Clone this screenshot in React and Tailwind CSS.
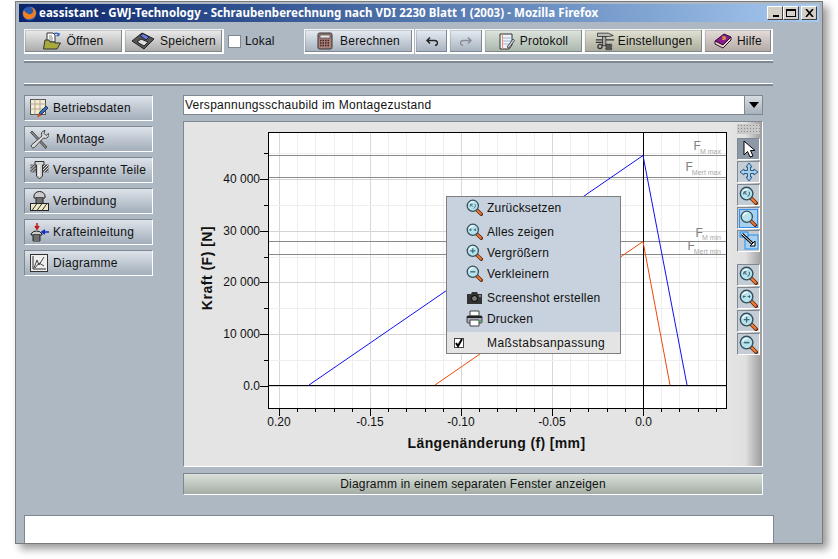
import React from "react";

const F = { fontFamily: '"Liberation Sans", Arial, sans-serif' };

const Mag = ({ v = "", s = 22 }) => (
  <svg width={s} height={s} viewBox="0 0 20 20" className="shrink-0">
    <path d="M12 12 L18 18" stroke="#5a2a10" strokeWidth="4" strokeLinecap="round" />
    <path d="M12.5 12.5 L17.5 17.5" stroke="#f07830" strokeWidth="2.4" strokeLinecap="round" />
    <circle cx="8" cy="8" r="6.6" fill="#b8e2ec" stroke="#34505c" strokeWidth="1.5" />
    <path d="M4 7 A4.4 4.4 0 0 1 9 3.6" stroke="#fff" strokeWidth="1.2" fill="none" />
    {v === "plus" && <path d="M5 8H11M8 5V11" stroke="#3c6a7a" strokeWidth="1.4" />}
    {v === "minus" && <path d="M5 8H11" stroke="#3c6a7a" strokeWidth="1.6" />}
    {v === "all" && <path d="M4 8H7M9 8H12M5 6.5V9.5M11 6.5V9.5" stroke="#3c6a7a" strokeWidth="1.1" />}
    {v === "reset" && <path d="M5 6 L8 9 M5 6V9M5 6H8M10.5 6 A3.4 3.4 0 0 1 9 11" stroke="#3c6a7a" strokeWidth="1.1" fill="none" />}
  </svg>
);

const Folder = () => (
  <svg width="18" height="18" viewBox="0 0 18 18">
    <path d="M4 1H10L12 3V10H4Z" fill="#fff" stroke="#333" />
    <path d="M6 4H9M6 6H10M6 8H10" stroke="#888" />
    <path d="M11 2 A3 3 0 0 1 16 3 M16 3.5L16 1M16 3.5L13.5 3.5" stroke="#3060c0" strokeWidth="1.3" fill="none" />
    <path d="M.5 17 L2 8 H6 L7 10 H12 V11 H17.5 L14 17Z" fill="#a8a83c" stroke="#333" />
  </svg>
);
const Floppy = () => (
  <svg width="24" height="18" viewBox="0 0 24 18">
    <path d="M1 9 L11 1 L23 7 L13 17Z" fill="#555" stroke="#222" />
    <path d="M9 3.5 L12 1.5 L18 5 L15 8Z" fill="#6a78e8" stroke="#222" />
    <path d="M6 10 L10 7 L17 10 L13 14Z" fill="#ddd" stroke="#222" />
  </svg>
);
const Calc = () => (
  <svg width="16" height="18" viewBox="0 0 16 18">
    <rect x="1" y="1" width="14" height="16" rx="1.5" fill="#a88078" stroke="#333" />
    <rect x="3" y="3" width="10" height="3" fill="#e8e8e8" stroke="#333" strokeWidth=".6" />
    <path d="M3 8.5H13M3 11H13M3 13.5H13" stroke="#402020" strokeWidth="1.3" strokeDasharray="1.5 1" />
  </svg>
);
const Undo = ({ c = "#222", flip }) => (
  <svg width="12" height="9" viewBox="0 0 12 9" style={flip ? { transform: "scaleX(-1)" } : undefined}>
    <path d="M4 .5 L1 3.5 L4 6.5 M1.5 3.5 H8 A3 2.5 0 0 1 9 8.5" stroke={c} strokeWidth="1.5" fill="none" />
  </svg>
);
const Note = () => (
  <svg width="16" height="17" viewBox="0 0 16 17">
    <path d="M1 1H13V12L10 16H1Z" fill="#eef2fa" stroke="#333" />
    <path d="M3.5 1V16" stroke="#f09060" />
    <path d="M4 5H12M4 8H12M4 11H11" stroke="#a0b8d8" />
    <path d="M8 14 L14 6 L15.5 7.5 L10 15Z" fill="#ccc" stroke="#333" strokeWidth=".8" />
  </svg>
);
const Tools = () => (
  <svg width="20" height="19" viewBox="0 0 24 22">
    <path d="M3 1 H16 L22 4 L16 5 H3Z" fill="#bbb" stroke="#333" />
    <rect x="9" y="5" width="4" height="11" fill="#aaa" stroke="#333" />
    <path d="M1 9 H9 M13 9 H23 M1 12H9" stroke="#333" strokeWidth="1.5" />
    <rect x="13" y="14" width="7" height="7" fill="#555" stroke="#222" strokeDasharray="1 1" />
    <circle cx="6" cy="17" r="2.5" fill="none" stroke="#333" strokeWidth="1.5" />
  </svg>
);
const Book = () => (
  <svg width="18" height="16" viewBox="0 0 18 16">
    <path d="M1 8 L10 1 L17 4 L9 12Z" fill="#8a1a90" stroke="#301030" />
    <path d="M1 8 L9 12 L17 4 V7 L9 15 L1 11Z" fill="#e8d8c8" stroke="#301030" />
    <path d="M8 4 H11 V6 H9 V7" stroke="#f0d020" strokeWidth="1.2" fill="none" />
  </svg>
);
const Table = () => (
  <svg width="19" height="19" viewBox="0 0 19 19">
    <rect x=".5" y=".5" width="15" height="15" fill="#f4ecd4" stroke="#555" />
    <path d="M.5 5H15.5M.5 10H15.5M5 .5V15.5M10 .5V15.5" stroke="#b0a890" />
    <path d="M8 17 L10 13 L16 7 L18 9 L12 15Z" fill="#3070c0" stroke="#223" strokeWidth=".8" />
    <path d="M7 18.5 L8.5 14.5 L11.5 16.5Z" fill="#e05020" />
  </svg>
);
const Wrench = () => (
  <svg width="19" height="19" viewBox="0 0 19 19">
    <path d="M2 1 L17 17 L15.5 18.5 L.5 2.5Z" fill="#888" stroke="#333" strokeWidth=".8" />
    <path d="M15 .5 A3.6 3.6 0 0 0 12 6 L1.5 15 A2 2 0 0 0 4 17.8 L13.5 8 A3.6 3.6 0 0 0 18.5 3.5 L16 5.5 L14 3.5Z" fill="#dcdcdc" stroke="#333" strokeWidth=".9" />
  </svg>
);
const Hatch = () => (
  <svg width="19" height="19" viewBox="0 0 19 19">
    <rect x=".5" y="3.5" width="5.5" height="8" fill="#555" />
    <rect x="13" y="3.5" width="5.5" height="8" fill="#555" />
    <path d="M.5 6L3 3.5M.5 9L5.5 4M1 11.5L6 6.5M4 11.5L6 9.5M13 6L15.5 3.5M13 9L18 4M13.5 11.5L18.5 6.5M16.5 11.5L18.5 9.5" stroke="#eee" strokeWidth=".9" />
    <path d="M5 .5 H14 V4 H12.5 V15 L9.5 18 L6.5 15 V4 H5Z" fill="#d4d4d4" stroke="#333" />
    <path d="M9 4V15" stroke="#fff" />
  </svg>
);
const Bolt = () => (
  <svg width="19" height="20" viewBox="0 0 19 20">
    <path d="M4 5 A5.5 4.5 0 0 1 15 5 V7 H4Z" fill="#ccc" stroke="#222" />
    <path d="M6 7H13V13H6Z" fill="#bbb" stroke="#222" />
    <path d="M6 9H13M6 11H13" stroke="#222" />
    <rect x=".5" y="12.5" width="18" height="7" fill="#eee8c8" stroke="#222" />
    <path d="M2 19.5 L7 12.5 M7 19.5 L12 12.5 M12 19.5 L17 12.5" stroke="#333" />
  </svg>
);
const BoltForce = () => (
  <svg width="19" height="19" viewBox="0 0 19 19">
    <path d="M1 11 A6 5 0 0 1 12 11 V12H1Z" fill="#ccc" stroke="#222" />
    <path d="M3 12H10V18H3Z" fill="#bbb" stroke="#222" />
    <path d="M3 14H10M3 16H10" stroke="#222" />
    <path d="M7 0V5M5 3L7 6L9 3" stroke="#c02020" strokeWidth="1.6" fill="none" />
    <path d="M19 9H12M15 7L12 9L15 11" stroke="#1030c0" strokeWidth="1.6" fill="none" />
  </svg>
);
const Graph = () => (
  <svg width="18" height="18" viewBox="0 0 18 18">
    <rect x=".5" y=".5" width="17" height="17" fill="#eee" stroke="#333" />
    <path d="M3 2V15H16" stroke="#333" fill="none" />
    <path d="M4 14 L7 6 L9 11 L14 3 M5 14 L9 9 L14 12" stroke="#333" strokeWidth=".9" fill="none" />
  </svg>
);
const Camera = () => (
  <svg width="15" height="12" viewBox="0 0 15 12">
    <path d="M0 2H4L5 0H10L11 2H15V12H0Z" fill="#333" />
    <circle cx="7.5" cy="6.5" r="3" fill="#777" stroke="#000" />
    <rect x="12" y="3.5" width="2" height="1" fill="#ddd" />
  </svg>
);
const Printer = () => (
  <svg width="17" height="17" viewBox="0 0 17 17">
    <path d="M4 1H13V6H4Z" fill="#fff" stroke="#444" />
    <rect x="1" y="6" width="15" height="7" rx="1" fill="#aab" stroke="#444" />
    <rect x="1" y="6" width="15" height="2" fill="#222" />
    <path d="M4 10H13V16H4Z" fill="#fff" stroke="#444" />
    <rect x="13" y="10" width="2" height="1.5" fill="#20c040" />
  </svg>
);

const Btn = ({ w, tone, children }) => (
  <div
    className={`h-[25px] flex items-center justify-center gap-[5px] border-t border-l border-r-2 border-b-2 border-t-[#f4f6f8] border-l-[#f4f6f8] border-r-white border-b-white bg-linear-to-b shadow-[inset_-1px_-1px_0_#7f8790,inset_1px_1px_0_#7f879055] ${tone} ${w}`}
  >
    {children}
  </div>
);

const GRAY = "from-[#ececec] to-[#a9a9a9]";
const BLUE = "from-[#e6ecf3] to-[#a7b2be]";
const GREEN = "from-[#dee5de] to-[#a9b6ab]";
const BEIGE = "from-[#e3e3d6] to-[#aaaa98]";
const ROSE = "from-[#e6dedb] to-[#b2a8a4]";

const Side = ({ icon, label }) => (
  <div className="w-[129px] h-[26px] flex items-center pl-[5px] border border-[#7f8790] border-r-white border-b-white bg-linear-to-b from-[#dde3ea] to-[#a3aeba] tracking-[0.3px] text-[12px] text-[#111]">
    <span className="w-[23px] flex justify-start shrink-0">{icon}</span>
    {label}
  </div>
);

const Sep = () => <div className="h-[3px] w-[749px] bg-white border-b-2 border-b-[#7f8790]" />;

const Tool = ({ active, children }) => (
  <div className={`w-[23px] h-[22px] flex items-center justify-center border border-[#7f8790] border-r-white border-b-white ${active ? "bg-[#8c98a8]" : "bg-[#c4cdd6]"}`}>
    {children}
  </div>
);

const Chart = () => {
  const xt = [279, 370, 461, 552, 643];
  const xl = ["0.20", "-0.15", "-0.10", "-0.05", "0.0"];
  const yt = [386, 334, 282, 231, 179];
  const yl = ["0.0", "10 000", "20 000", "30 000", "40 000"];
  const minorX = [];
  for (let x = 279 + 18.2; x < 726; x += 18.2) minorX.push(Math.round(x));
  const minorY = [153, 205, 257, 308, 360];
  return (
    <svg width="545" height="344" viewBox="184 122 545 344" className="shrink-0" style={{ fontFamily: '"Liberation Sans", Arial, sans-serif' }}>
      <rect x="268.5" y="132.5" width="458" height="276" fill="#fff" />
      {minorX.map((x) => (
        <path key={x} d={`M${x + 0.5} 133V408`} stroke="#eeeeee" />
      ))}
      {xt.map((x) => (
        <path key={x} d={`M${x + 0.5} 133V408`} stroke="#d8d8d8" />
      ))}
      {minorY.map((y) => (
        <path key={y} d={`M269 ${y + 0.5}H726`} stroke="#eeeeee" />
      ))}
      {yt.map((y) => (
        <path key={y} d={`M269 ${y + 0.5}H726`} stroke="#d4d4d4" />
      ))}
      {[155, 177, 241, 254].map((y) => (
        <path key={y} d={`M269 ${y + 0.5}H726`} stroke="#8a8a8a" />
      ))}
      <path d="M643.5 133V408" stroke="#000" />
      <path d="M269 385.5H726" stroke="#000" />
      <path d="M309 385L643 155.5L687 385" stroke="#1010f0" fill="none" />
      <path d="M435 385L643 241.5L670 385" stroke="#f04808" fill="none" />
      <rect x="268.5" y="132.5" width="458" height="276" fill="none" stroke="#000" />
      {xt.map((x, i) => (
        <g key={x}>
          <path d={`M${x + 0.5} 408V416`} stroke="#000" />
          <text x={x + (i === 4 ? 0.5 : 0)} y="426" textAnchor="middle" fontSize="12" fill="#111">{xl[i]}</text>
        </g>
      ))}
      {minorX.map((x) => (
        <path key={x} d={`M${x + 0.5} 408V412`} stroke="#000" />
      ))}
      {yt.map((y, i) => (
        <g key={y}>
          <path d={`M260 ${y + 0.5}H268`} stroke="#000" />
          <text x="260" y={y + 4} textAnchor="end" fontSize="12" fill="#111">{yl[i]}</text>
        </g>
      ))}
      {minorY.map((y) => (
        <path key={y} d={`M264 ${y + 0.5}H268`} stroke="#000" />
      ))}
      <text x="496.5" y="448" textAnchor="middle" fontSize="14" fontWeight="700" letterSpacing="0.36" fill="#111">Längenänderung (f) [mm]</text>
      <text transform="translate(212 268) rotate(-90)" textAnchor="middle" fontSize="14" fontWeight="700" letterSpacing="0.5" fill="#111">Kraft (F) [N]</text>
      {[
        [693.5, 150, 154, "M max"],
        [685.5, 171, 175, "Mert max"],
        [695.5, 237, 240, "M min"],
        [687.5, 250, 254, "Mert min"],
      ].map(([x, y, y2, t]) => (
        <g key={t}>
          <text x={x} y={y} fontSize="12" fill="#808080">F</text>
          <text x="721" y={y2} fontSize="7" textAnchor="end" fill="#a8a8a8">{t}</text>
        </g>
      ))}
    </svg>
  );
};

const Item = ({ icon, label, mt = "" }) => (
  <div className={`flex items-center h-[21px] pl-[18px] gap-[3px] ${mt}`}>
    <span className="w-[19px] flex justify-center">{icon}</span>
    {label}
  </div>
);

export default function App() {
  return (
    <div className="w-[838px] h-[559px] overflow-hidden bg-white pt-[1px] pl-[15px] text-[#111]" style={F}>
      <div className="w-[808px] h-[543px] flex flex-col border border-[#7a7a7a] px-[3px] pt-[2px] bg-[#aeb8c3] shadow-[5px_5px_8px_#00000066] overflow-hidden">
        <div className="h-[18px] shrink-0 flex items-center bg-linear-to-r from-[#0a246a] to-[#a6caf0] pl-[3px] pr-[2px]">
          <svg width="15" height="15" viewBox="0 0 15 15" className="shrink-0">
            <circle cx="7.5" cy="7.5" r="7" fill="#2a5ab0" />
            <path d="M2 11 A7 7 0 0 0 14 7 A6 6 0 0 0 8 1 A4 4 0 0 1 11 6 A3.5 3.5 0 0 1 5 7 A4 4 0 0 1 2 4 A7 7 0 0 0 2 11Z" fill="#f08020" />
          </svg>
          <span className="ml-[2px] text-white font-bold text-[11.5px] tracking-[0.06px] whitespace-nowrap" style={{ fontFamily: '"Noto Sans", sans-serif' }}>
            eassistant - GWJ-Technology - Schraubenberechnung nach VDI 2230 Blatt 1 (2003) - Mozilla Firefox
          </span>
          <div className="ml-auto flex">
            <div className="w-[16px] h-[14px] bg-[#d4d0c8] border border-white border-r-[#404040] border-b-[#404040] flex items-end pb-[2px] pl-[5px]"><div className="w-[6px] h-[2px] bg-black" /></div>
            <div className="w-[16px] h-[14px] bg-[#d4d0c8] border border-white border-r-[#404040] border-b-[#404040] p-[2px]"><div className="w-full h-full border border-black border-t-2" /></div>
            <div className="w-[16px] h-[14px] ml-[2px] bg-[#d4d0c8] border border-white border-r-[#404040] border-b-[#404040] flex items-center justify-center">
              <svg width="9" height="8" viewBox="0 0 9 8"><path d="M1 0L8 8M8 0L1 8" stroke="#000" strokeWidth="1.6" /></svg>
            </div>
          </div>
        </div>

        <div className="pl-[5px] flex flex-col">
          <div className="mt-[7px] flex items-center text-[12px] tracking-[0.2px]">
            <Btn w="w-[100px]" tone={GRAY}><Folder /><span>Öffnen</span></Btn>
            <Btn w="w-[100px]" tone={GRAY}><Floppy /><span>Speichern</span></Btn>
            <div className="ml-[4px] -mt-[1px] flex items-center gap-[4px] w-[76px]">
              <div className="w-[13px] h-[13px] bg-white border border-[#7f8790]" />
              <span>Lokal</span>
            </div>
            <Btn w="w-[110px]" tone={BLUE}><Calc /><span className="ml-[2px]">Berechnen</span></Btn>
            <div className="w-[1px]" />
            <Btn w="w-[34px]" tone={BLUE}><Undo /></Btn>
            <Btn w="w-[35px]" tone={BLUE}><Undo c="#8a8f96" flip /></Btn>
            <Btn w="w-[100px]" tone={GREEN}><Note /><span>Protokoll</span></Btn>
            <Btn w="w-[120px]" tone={BEIGE}><Tools /><span className="-ml-[2px]">Einstellungen</span></Btn>
            <Btn w="w-[69px]" tone={ROSE}><Book /><span>Hilfe</span></Btn>
          </div>

          <div className="mt-[6px]"><Sep /></div>
          <div className="mt-[20px]"><Sep /></div>

          <div className="mt-[9px] flex gap-[30px]">
            <div className="flex flex-col gap-[5px] w-[129px]">
              <Side icon={<Table />} label="Betriebsdaten" />
              <Side icon={<Wrench />} label={<span className="ml-[3px]">Montage</span>} />
              <Side icon={<Hatch />} label="Verspannte Teile" />
              <Side icon={<Bolt />} label="Verbindung" />
              <Side icon={<BoltForce />} label="Krafteinleitung" />
              <Side icon={<Graph />} label="Diagramme" />
            </div>

            <div className="w-[580px] flex flex-col">
              <div className="h-[20px] flex border border-[#7f8790] bg-white text-[12px] tracking-[0.28px]">
                <span className="flex-1 pl-[1px] leading-[18px]">Verspannungsschaubild im Montagezustand</span>
                <div className="w-[18px] flex items-center justify-center bg-linear-to-b from-[#d8dde3] to-[#a8b2bd] border-l border-[#7f8790]">
                  <div className="w-0 h-0 border-l-[5px] border-r-[5px] border-t-[6px] border-l-transparent border-r-transparent border-t-black" />
                </div>
              </div>

              <div className="mt-[6px] h-[346px] relative flex border border-[#7f8790] border-r-white border-b-white bg-[#e4e4e4]">
                <Chart />
                <div className="flex-1 pl-[8px] flex flex-col items-start bg-linear-to-r from-[#e4e4e4] via-[#e0e0e0] to-[#9c9c9c]">
                  <div className="mt-[2px] w-[23px] h-[10px] mb-[4px] bg-[#c8c8c8] bg-[radial-gradient(#8a8a8a_1px,transparent_1px)] bg-[length:3px_3px]" />
                  <div className="flex flex-col gap-[1px]">
                    <Tool active>
                      <svg width="14" height="18" viewBox="0 0 14 18"><path d="M2 1V15L5.5 11.5L8 17L11 16L8.5 10.5H13Z" fill="#fff" stroke="#000" /></svg>
                    </Tool>
                    <Tool>
                      <svg width="20" height="20" viewBox="0 0 20 20"><path d="M10 1L13 5H11.5V8.5H15V7L19 10L15 13V11.5H11.5V15H13L10 19L7 15H8.5V11.5H5V13L1 10L5 7V8.5H8.5V5H7Z" fill="#a8d0e8" stroke="#2a5a8a" /></svg>
                    </Tool>
                    <Tool><Mag v="reset" s={19} /></Tool>
                    <Tool><div className="w-[19px] h-[19px] bg-[#a8d0f0] border border-[#3090f0] flex items-center justify-center"><Mag s={17} /></div></Tool>
                    <Tool>
                      <svg width="20" height="20" viewBox="0 0 20 20"><rect x="6" y="4" width="13" height="14" fill="#a8d0f0" stroke="#2090f0" /><rect x="1" y="1" width="8" height="5" fill="#a8d0f0" stroke="#2090f0" /><path d="M3 3L15 14" stroke="#000" strokeWidth="3" /><path d="M3 3L15 14" stroke="#fff" strokeWidth="1" /><path d="M11 15H16V10Z" fill="#fff" stroke="#000" /></svg>
                    </Tool>
                  </div>
                  <div className="mt-[12px] flex flex-col gap-[1px]">
                    <Tool><Mag v="reset" s={19} /></Tool>
                    <Tool><Mag v="all" s={19} /></Tool>
                    <Tool><Mag v="plus" s={19} /></Tool>
                    <Tool><Mag v="minus" s={19} /></Tool>
                  </div>
                </div>

                <div className="absolute left-[262px] top-[74px] w-[175px] h-[158px] border border-[#7f7f7f] bg-[#c8d2de] text-[12px] tracking-[0.2px] flex flex-col">
                  <Item icon={<Mag v="reset" s={17} />} label="Zurücksetzen" />
                  <Item icon={<Mag v="all" s={17} />} label="Alles zeigen" mt="mt-[3px]" />
                  <Item icon={<Mag v="plus" s={17} />} label="Vergrößern" />
                  <Item icon={<Mag v="minus" s={17} />} label="Verkleinern" />
                  <Item icon={<Camera />} label="Screenshot erstellen" mt="mt-[3px]" />
                  <Item icon={<Printer />} label="Drucken" />
                  <div className="mt-[3px] flex-1 flex items-center bg-[#e4e4e4] pl-[7px]">
                    <svg width="10" height="10" viewBox="0 0 10 10"><rect x=".5" y=".5" width="9" height="9" fill="#fff" stroke="#444" /><path d="M2 5L4 8L8 1" stroke="#000" strokeWidth="2" fill="none" /></svg>
                    <span className="ml-[23px] tracking-[0.4px]">Maßstabsanpassung</span>
                  </div>
                </div>
              </div>

              <div className="mt-[6px] h-[22px] flex items-center justify-center border border-white border-t-[#7f8790] border-l-[#7f8790] bg-linear-to-b from-[#dbe1da] to-[#a3aea6] text-[12px] tracking-[0.2px]">
                Diagramm in einem separaten Fenster anzeigen
              </div>
            </div>
          </div>

          <div className="mt-[20px] w-[750px] h-[40px] bg-white border border-[#7f8790]" />
        </div>
      </div>
    </div>
  );
}
